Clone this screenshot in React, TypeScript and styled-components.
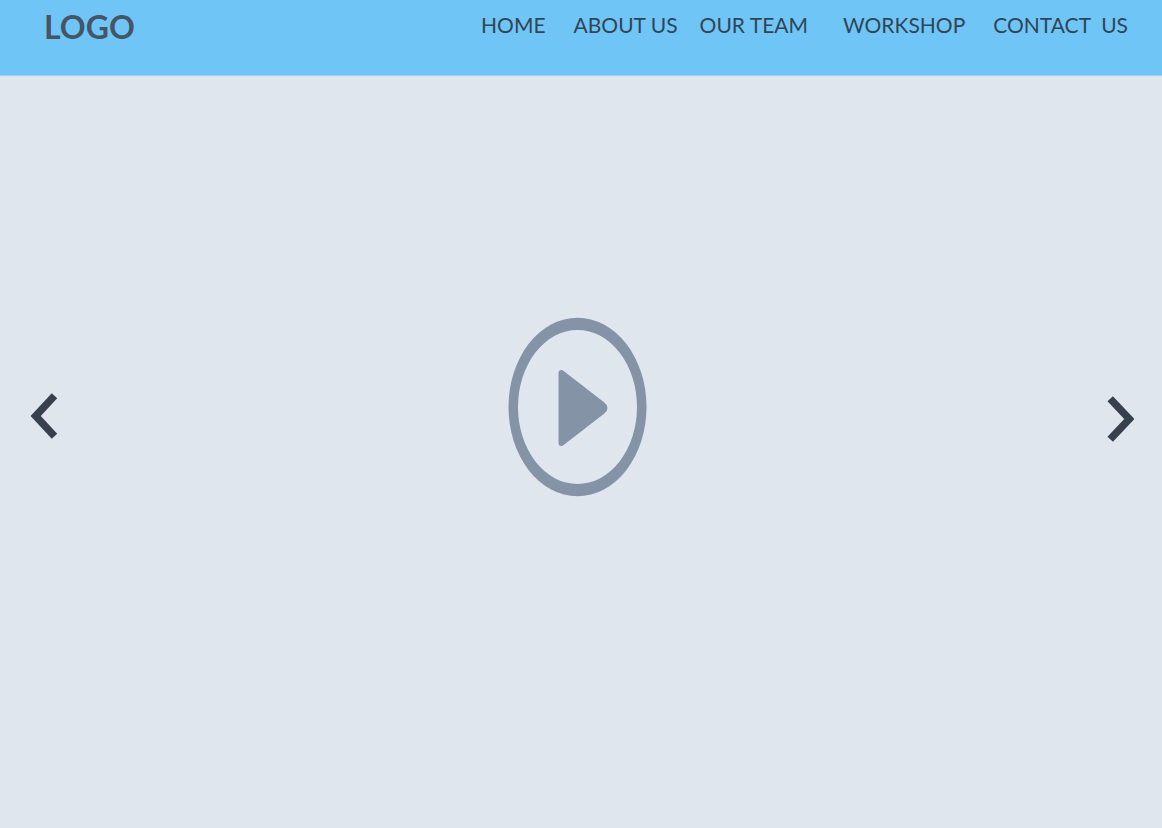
import React from "react";
import styled, { createGlobalStyle } from "styled-components";

const GlobalStyle = createGlobalStyle`
  *, *::before, *::after { box-sizing: border-box; }
  body {
    margin: 0;
    background: #dfe6ee;
    font-family: Lato, "Liberation Sans", sans-serif;
  }
`;

const Page = styled.div`
  min-height: 100vh;
  display: flex;
  flex-direction: column;
`;

const Header = styled.header`
  display: flex;
  justify-content: space-between;
  align-items: flex-start;
  min-height: 76px;
  padding: 6px 34px 0 44px;
  background: #70c5f7;
  border-bottom: 1px solid #9bd2f5;
`;

const Logo = styled.a`
  color: #445566;
  font-size: 32px;
  font-weight: 700;
  line-height: 42px;
  text-decoration: none;
`;

const NavList = styled.ul`
  display: flex;
  margin: 0;
  padding: 0;
  list-style: none;
`;

const NavItem = styled.li<{ $space: number }>`
  margin-left: ${({ $space }) => $space}px;
`;

const NavLink = styled.a`
  display: block;
  color: #2f4558;
  font-size: 21px;
  line-height: 38px;
  text-decoration: none;
  white-space: pre;
`;

const Hero = styled.main`
  flex: 1;
  display: flex;
  justify-content: space-between;
  align-items: center;
  padding: 0 28px 90px;
`;

const IconButton = styled.button`
  display: block;
  padding: 0;
  border: 0;
  background: none;
  cursor: pointer;

  svg { display: block; }
`;

const ArrowIcon = styled.svg`
  fill: none;
  stroke: #37414d;
  stroke-width: 7.5;
  stroke-linejoin: miter;
`;

const PlayIcon = styled.svg`
  fill: #8493a6;
`;

const links = [
  { label: "HOME", href: "#home", space: 0 },
  { label: "ABOUT US", href: "#about", space: 28 },
  { label: "OUR TEAM", href: "#team", space: 22 },
  { label: "WORKSHOP", href: "#workshop", space: 35 },
  { label: "CONTACT  US", href: "#contact", space: 28 },
];

export default function App() {
  return (
    <Page>
      <GlobalStyle />
      <Header>
        <Logo href="#home">LOGO</Logo>
        <nav aria-label="Main">
          <NavList>
            {links.map(({ label, href, space }) => (
              <NavItem key={href} $space={space}>
                <NavLink href={href}>{label}</NavLink>
              </NavItem>
            ))}
          </NavList>
        </nav>
      </Header>
      <Hero>
        <IconButton type="button" aria-label="Previous">
          <ArrowIcon width="32" height="72" viewBox="0 0 32 72">
            <path d="M26.5 24.7 7.7 45 26.5 65.3" />
          </ArrowIcon>
        </IconButton>
        <IconButton type="button" aria-label="Play video">
          <PlayIcon width="148" height="180" viewBox="0 0 148 180">
            <path
              fillRule="evenodd"
              d="M1.5 90a69 89.3 0 1 1 138 0a69 89.3 0 1 1-138 0zM11 90a59.5 77 0 1 0 119 0a59.5 77 0 1 0-119 0z"
            />
            <path d="M51.5 56.5Q51.5 53 54 53Q55.5 53 57 54.2L97 85.3Q100.5 88 100.5 91Q100.5 94 97 96.7L57 127.8Q55.5 129 54 129Q51.5 129 51.5 125.5Z" />
          </PlayIcon>
        </IconButton>
        <IconButton type="button" aria-label="Next">
          <ArrowIcon width="32" height="72" viewBox="0 0 32 72">
            <path d="M8.2 27.7 27.3 48 8.2 68.3" />
          </ArrowIcon>
        </IconButton>
      </Hero>
    </Page>
  );
}
